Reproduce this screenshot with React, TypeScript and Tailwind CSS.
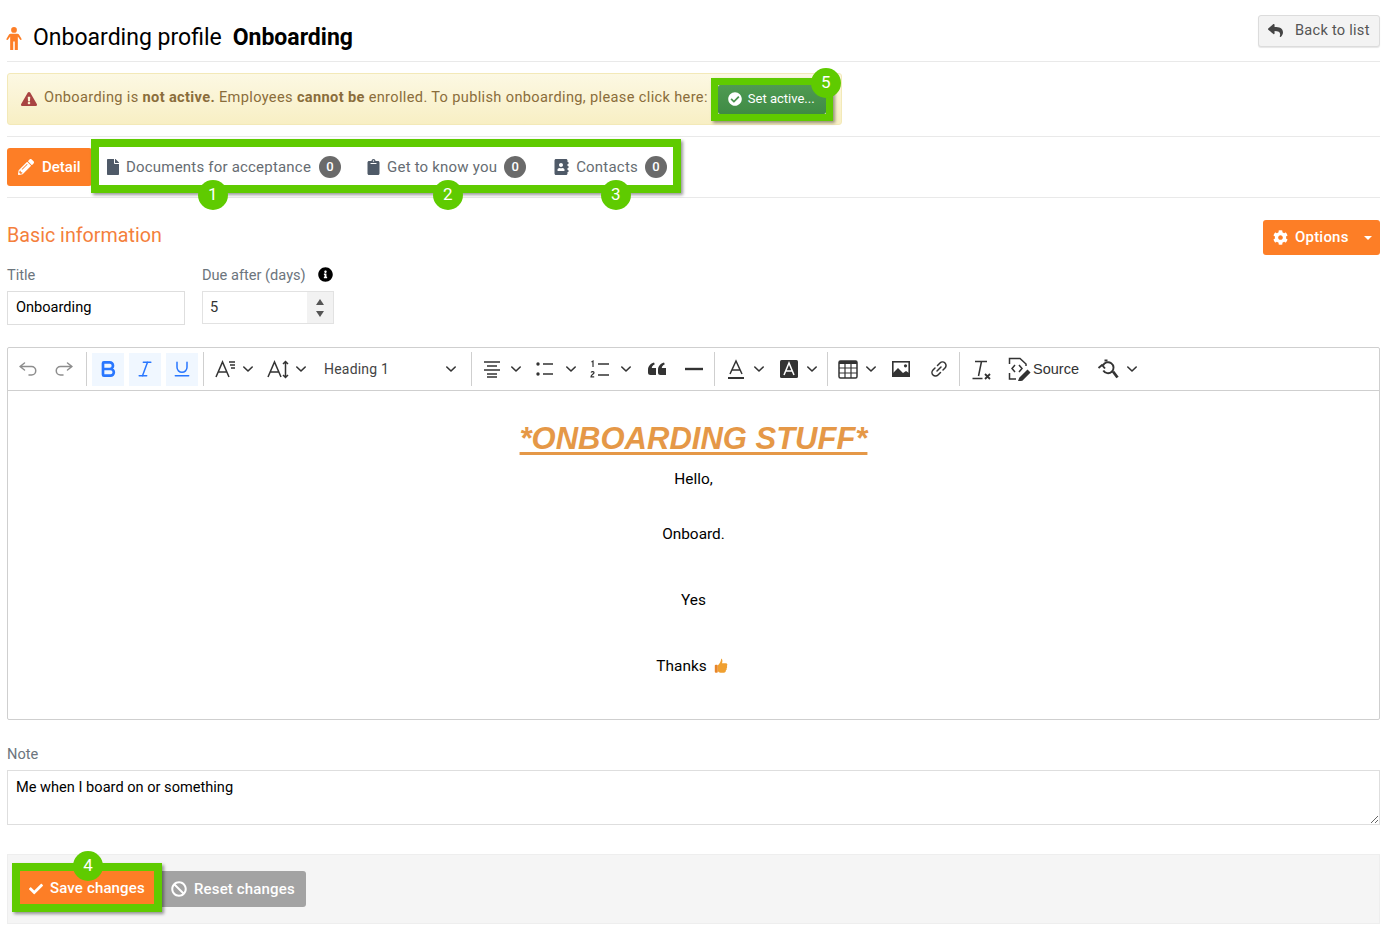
import type { ReactNode } from "react";
import {
  FaAddressBook,
  FaBan,
  FaCheck,
  FaCheckCircle,
  FaClipboard,
  FaCog,
  FaExclamationTriangle,
  FaFile,
  FaInfoCircle,
  FaPencilAlt,
  FaReply,
} from "react-icons/fa";
import { Bold, Italic, Underline } from "lucide-react";

function Callout({ n, className }: { n: number; className: string }) {
  return (
    <span
      className={`absolute z-20 flex h-[30px] w-[30px] items-center justify-center rounded-full bg-[#5fcb00] text-[17px] text-white ${className}`}
    >
      {n}
    </span>
  );
}

function Frame({ className }: { className: string }) {
  return (
    <span
      className={`pointer-events-none absolute z-10 border-solid border-[#5fcb00] shadow-[2px_2px_3px_rgba(0,0,0,0.4)] ${className}`}
    />
  );
}

function Badge() {
  return (
    <span className="flex h-[22px] w-[22px] shrink-0 items-center justify-center rounded-full bg-[#6a6a6a] text-[13px] font-medium tracking-normal text-white">
      0
    </span>
  );
}

function Sep({ className }: { className: string }) {
  return <span className={`h-[34px] w-px bg-[#cfcfcf] ${className}`} />;
}

function Chev({ className }: { className: string }) {
  return (
    <svg viewBox="0 0 12 12" width={12} height={12} fill="none" stroke="#333" strokeWidth={1.6} className={`shrink-0 ${className}`}>
      <path d="M1.800 4 6 8l4.200-4" strokeLinecap="round" strokeLinejoin="round" />
    </svg>
  );
}

function Ic({ className, children }: { className: string; children: ReactNode }) {
  return (
    <svg viewBox="0 0 24 24" width={24} height={24} fill="none" stroke="#333" strokeWidth={1.5} className={`shrink-0 ${className}`}>
      {children}
    </svg>
  );
}

function ActiveBtn({ className, children }: { className: string; children: ReactNode }) {
  return (
    <span className={`flex h-[33px] w-[32px] shrink-0 items-center justify-center bg-[#f0f7ff] text-[#2977ff] ${className}`}>
      {children}
    </span>
  );
}

function Toolbar() {
  return (
    <div className="flex h-[43px] items-center border-b border-[#cfcfcf] pl-[2px] font-['Liberation_Sans',sans-serif] text-[14.5px] text-[#333]">
      <Ic className="ml-[6px]">
        <path d="M8.500 6 4 9.500 8.500 13M4 9.500h11.500a4.200 4.200 0 0 1 0 8.500H13" stroke="#8d8d8d" strokeLinecap="round" strokeLinejoin="round" />
      </Ic>
      <Ic className="ml-[12px]">
        <path d="m15.500 6 4.500 3.500-4.500 3.500M20 9.500H8.500a4.200 4.200 0 0 0 0 8.500H11" stroke="#8d8d8d" strokeLinecap="round" strokeLinejoin="round" />
      </Ic>
      <Sep className="ml-[10px]" />
      <ActiveBtn className="ml-[5px]"><Bold size={20} strokeWidth={3.2} /></ActiveBtn>
      <ActiveBtn className="ml-[5px]"><Italic size={20} strokeWidth={1.8} /></ActiveBtn>
      <ActiveBtn className="ml-[5px]"><Underline size={20} strokeWidth={1.8} /></ActiveBtn>
      <Sep className="ml-[5px]" />

      {/* font family */}
      <Ic className="ml-[9px]">
        <path d="m3 20 6.500-15L16 20M5.500 15h8M16 5h6M17 8h5M18 11h4" />
      </Ic>
      <Chev className="ml-[5px]" />
      {/* font size */}
      <Ic className="ml-[12px]">
        <path d="m2 20 6.500-15L15 20M4.500 15h8M19.500 5v15M17 7l2.500-2.500L22 7M17 18l2.500 2.500L22 18" />
      </Ic>
      <Chev className="ml-[5px]" />
      <span className="ml-[17px] w-[121px] font-['Roboto',sans-serif] text-[14px] tracking-[0.2px] text-[#444]">Heading 1</span>
      <Chev className="" />
      <Sep className="ml-[14px]" />

      {/* alignment */}
      <Ic className="ml-[8px]">
        <path d="M4 5h16M7 9h10M4 13h16M7 17h10M7 20h10" />
      </Ic>
      <Chev className="ml-[6px]" />
      {/* bullets */}
      <Ic className="ml-[11px]">
        <path d="M10 7h10M10 17h10" />
        <circle cx="5" cy="7" r="1.700" fill="#333" stroke="none" />
        <circle cx="5" cy="17" r="1.700" fill="#333" stroke="none" />
      </Ic>
      <Chev className="ml-[8px]" />
      {/* numbered */}
      <Ic className="ml-[11px]">
        <path d="M10 7h11M10 18h11" />
        <path d="M3.500 5 5 4v6M3 15.500c1-1.500 3-1 3 .3 0 1.200-3 2-3 4h3.200" strokeWidth={1.200} />
      </Ic>
      <Chev className="ml-[8px]" />
      {/* quote */}
      <svg viewBox="0 0 24 24" width={24} height={24} className="ml-[13px] shrink-0" fill="#333">
        <path d="M11 18H5.500A2.500 2.500 0 0 1 3 15.500V13c0-4 2.500-6.500 6-7.500l.8 1.800C7.800 8.200 7 9.500 6.800 11H11ZM21 18h-5.500a2.500 2.500 0 0 1-2.500-2.500V13c0-4 2.500-6.500 6-7.500l.8 1.800c-2 .9-2.800 2.200-3 3.700H21Z" />
      </svg>
      {/* horizontal line */}
      <Ic className="ml-[13px]">
        <path d="M3 12h18" strokeWidth={2.400} />
      </Ic>
      <Sep className="ml-[8px]" />

      {/* font color */}
      <Ic className="ml-[9px]">
        <path d="m6 17 6-13 6 13M8 13h8" />
        <path d="M4 21h16" strokeWidth={2} />
      </Ic>
      <Chev className="ml-[5px]" />
      {/* background color */}
      <svg viewBox="0 0 24 24" width={24} height={24} className="ml-[12px] shrink-0">
        <rect x="3" y="3" width="18" height="18" rx="1.500" fill="#333" />
        <path d="m7 18 5-12 5 12M8.800 14h6.400" fill="none" stroke="#fff" strokeWidth={1.500} />
      </svg>
      <Chev className="ml-[5px]" />
      <Sep className="ml-[9px]" />

      {/* table */}
      <Ic className="ml-[8px]">
        <rect x="3" y="4" width="18" height="17" rx="1.500" />
        <path d="M3 5.500h18" strokeWidth={3} />
        <path d="M3 11h18M3 16h18M9 4v17M15 4v17" strokeWidth={1.200} />
      </Ic>
      <Chev className="ml-[5px]" />
      {/* image */}
      <Ic className="ml-[12px]">
        <rect x="3.800" y="4.800" width="16.400" height="14.400" strokeWidth={1.600} />
        <path d="M4 19v-3l5-5 5 5 3-2 3 2v3Z" fill="#333" stroke="none" />
        <circle cx="16.500" cy="8.800" r="1.600" fill="#333" stroke="none" />
      </Ic>
      {/* link */}
      <Ic className="ml-[14px]">
        <path d="M10.500 8.500 13 6a3.500 3.500 0 0 1 5 5l-2 2M13.500 15.500 11 18a3.500 3.500 0 0 1-5-5l2-2M10 14l4-4" strokeLinecap="round" />
      </Ic>
      <Sep className="ml-[8px]" />

      {/* clear formatting */}
      <Ic className="ml-[9px]">
        <path d="M6 4.500h12M12.500 4.500 9.500 19M3.500 21.500h10" />
        <path d="m16 17 5 5M21 17l-5 5" strokeWidth={1.800} />
      </Ic>
      {/* source editing */}
      <Ic className="ml-[14px]">
        <path d="M8 8 5 11.500 8 15M12 8l3 3.500-3 3.500" />
        <path d="M2.500 7V1.500H13L19 7v2M2.500 16v6H9" />
        <path d="m13 21 7.500-7.500 2 2L15 23l-3 .5Z" fill="#333" />
      </Ic>
      <span className="ml-[2px] w-[46px] pt-[1px]">Source</span>
      {/* find and replace */}
      <Ic className="ml-[17px]">
        <path d="M7 8.500a5.500 5.500 0 1 1 .3 5" strokeWidth={1.900} />
        <path d="m17 14.500 4.500 6" strokeWidth={2.800} />
        <path d="M2.500 11 6 8l3 3.500M8.500 3.500h3" strokeWidth={1.900} />
      </Ic>
      <Chev className="ml-[6px]" />
    </div>
  );
}

function PersonIcon() {
  return (
    <svg viewBox="0 0 16 24" width={16} height={23} className="ml-[-1px] mr-[11px] shrink-0" fill="#fd7e26">
      <circle cx="8" cy="3" r="3" />
      <path d="M4.500 7h7c.8 0 1.300.3 1.700.9l2.600 4.300c.5 1-.9 1.900-1.600.9L12 10v14H8.800V15H7.200v9H4V10l-2.200 3.100c-.7 1-2.100.1-1.600-.9l2.600-4.300C3.200 7.300 3.700 7 4.500 7Z" />
    </svg>
  );
}

function ThumbsUp() {
  return (
    <svg viewBox="0 0 16 16" width={16} height={16} className="ml-[6px] mr-[2px] inline-block align-[-3px]">
      <path d="M8.200.500c1.400.6 1.500 2.600.8 4.800h3.800c1.700 0 1.900 1.800 1.100 2.600.5.900.3 1.800-.3 2.300.3.900 0 1.700-.7 2.100.1 1.400-.8 2.400-2.100 2.400H7.500C6 14.700 5.400 14 5 13.300V7.300c1.500-1.400 3-3.800 3.200-6.800Z" fill="#f0a030" />
      <rect x="1.800" y="6.800" width="3" height="8" rx="1" fill="#e8862a" />
    </svg>
  );
}

export default function App() {
  return (
    <div className="min-h-[929px] bg-white pl-[7px] pr-[6px] font-['Roboto',sans-serif] text-[14.6px] text-black">
      {/* Header */}
      <div className="flex h-[62px] items-start justify-between border-b border-[#e9e9e9] pt-[15px]">
        <div className="mt-[7px] flex items-center text-[23px] leading-[32px]">
          <PersonIcon />
          <span>Onboarding profile</span>
          <span className="ml-[11px] font-bold">Onboarding</span>
        </div>
        <button className="flex h-[32px] w-[122px] items-center rounded-[3px] border border-[#dcdcdc] bg-[#f3f3f3] pb-[1px] pl-[9px] tracking-[0.25px] text-[#555] shadow-[0_1px_1px_rgba(0,0,0,0.1)]">
          <FaReply size={15} className="text-[#444]" />
          <span className="ml-[12px]">Back to list</span>
        </button>
      </div>

      {/* Alert */}
      <div className="mt-[11px] flex h-[52px] w-[835px] items-center rounded-[3px] border border-[#f3e9b8] bg-gradient-to-b from-[#fcf8e3] to-[#f8efc4] pl-[13px] text-[#8a6d3b]">
        <FaExclamationTriangle size={16} className="text-[#a94442]" />
        <span className="mb-[2px] ml-[7px] tracking-[0.345px]">
          Onboarding is <b className="font-bold">not active.</b> Employees <b className="font-bold">cannot be</b> enrolled. To publish onboarding, please click here:
        </span>
        <div className="relative ml-[10px]">
          <Frame className="-inset-[7px] border-[7px]" />
          <Callout n={5} className="-right-[15px] -top-[17px]" />
          <button className="flex h-[29px] w-[108px] items-center rounded-[2px] bg-gradient-to-b from-[#4f9a52] to-[#3f8b45] pl-[10px] text-[13px] text-white">
            <FaCheckCircle size={14} />
            <span className="ml-[6px]">Set active...</span>
          </button>
        </div>
      </div>
      <div className="mt-[11px] border-b border-[#e9e9e9]" />

      {/* Tabs */}
      <div className="mt-[11px] flex h-[38px] items-center">
        <button className="flex h-[38px] w-[85px] items-center rounded-[3px] bg-[#fd7e26] pl-[11px] text-[15px] font-medium text-white">
          <FaPencilAlt size={16} />
          <span className="ml-[8px]">Detail</span>
        </button>
        <div className="relative ml-[7px] flex h-[38px] w-[574px] items-center whitespace-nowrap pl-[8px] text-[15px] tracking-[0.2px] text-[#666c72]">
          <Frame className="-inset-x-[8px] -bottom-[7px] -top-[9px] border-[8px]" />
          <Callout n={1} className="left-[99px] top-[32px]" />
          <Callout n={2} className="left-[334px] top-[32px]" />
          <Callout n={3} className="left-[502px] top-[32px]" />
          <FaFile className="h-4 w-[12px] shrink-0 text-[#4f5a68]" />
          <span className="ml-[7px] mr-[8px]">Documents for acceptance</span>
          <Badge />
          <FaClipboard className="ml-[26px] h-4 w-[13px] shrink-0 text-[#4f5a68]" />
          <span className="mx-[7px]">Get to know you</span>
          <Badge />
          <FaAddressBook className="ml-[28px] h-4 w-[15px] shrink-0 text-[#4f5a68]" />
          <span className="ml-[7px] mr-[7px]">Contacts</span>
          <Badge />
        </div>
      </div>
      <div className="mt-[11px] border-b border-[#e9e9e9]" />

      {/* Basic information */}
      <div className="mt-[22px] flex h-[35px] items-start justify-between">
        <h2 className="text-[19.7px] leading-[32px] text-[#f47f3c]">Basic information</h2>
        <button className="flex h-[35px] w-[117px] items-center rounded-[3px] bg-[#fd7e26] pl-[10px] text-[15px] font-medium text-white">
          <FaCog size={15} />
          <span className="ml-[7px] tracking-[0.2px]">Options</span>
          <span className="ml-[15px] h-0 w-0 border-x-[4px] border-t-[4px] border-x-transparent border-t-white" />
        </button>
      </div>

      <div className="mt-[11px] flex gap-[17px]">
        <div className="w-[178px]">
          <label className="block h-[25px] leading-[18px] text-[#6c757d]">Title</label>
          <input
            readOnly
            value="Onboarding"
            className="h-[34px] w-full border border-[#dedede] pb-[2px] pl-[8px] text-black outline-none"
          />
        </div>
        <div className="w-[132px]">
          <label className="flex h-[25px] items-start justify-between leading-[18px] text-[#6c757d]">
            Due after (days)
            <FaInfoCircle size={15} className="mr-[1px] mt-[1px] text-black" />
          </label>
          <div className="flex h-[33px] border border-[#e2e2e2]">
            <input readOnly value="5" className="w-[104px] px-[7px] text-[#333] outline-none" />
            <div className="flex flex-1 flex-col items-center justify-center gap-[6px] bg-[#f2f2f2]">
              <span className="h-0 w-0 border-x-[4.5px] border-b-[6px] border-x-transparent border-b-[#555]" />
              <span className="h-0 w-0 border-x-[4.5px] border-t-[6px] border-x-transparent border-t-[#555]" />
            </div>
          </div>
        </div>
      </div>

      {/* Editor */}
      <div className="mt-[22px] h-[373px] rounded-[2px] border border-[#cfcfcf]">
        <Toolbar />
        <div className="pt-[28px] text-center text-[15.4px] leading-[24px]">
          <h1 className="font-['Liberation_Sans',sans-serif] text-[31px] font-bold italic leading-[40px] text-[#e59847] underline decoration-[3px] underline-offset-[3px]">
            *ONBOARDING STUFF*
          </h1>
          <p className="mt-[8px]">Hello,</p>
          <p className="mt-[31px]">Onboard.</p>
          <p className="mt-[42px]">Yes</p>
          <p className="mt-[42px]">
            Thanks
            <ThumbsUp />
          </p>
        </div>
      </div>

      {/* Note */}
      <label className="mt-[25px] block h-[25px] leading-[18px] text-[#6c757d]">Note</label>
      <textarea
        readOnly
        value="Me when I board on or something"
        className="block h-[55px] w-full border border-[#dedede] py-[6px] pl-[8px] pr-[9px] leading-[20px] text-black outline-none"
      />

      {/* Footer */}
      <div className="mt-[29px] flex h-[70px] items-start border border-[#eeeeee] bg-[#f5f5f5] pl-[12px] pt-[16px]">
        <div className="relative">
          <Frame className="-inset-x-[8px] -bottom-[7px] -top-[8px] border-[8px]" />
          <Callout n={4} className="left-[53px] -top-[20px]" />
          <button className="flex h-[34px] w-[134px] items-center bg-[#fd7e26] pl-[9px] pt-[1px] text-[15px] font-medium tracking-[0.15px] text-white">
            <FaCheck size={14} />
            <span className="ml-[7px]">Save changes</span>
          </button>
        </div>
        <button className="ml-[8px] flex h-[36px] w-[144px] items-center rounded-r-[3px] bg-[#a3a3a3] pl-[9px] text-[15px] font-medium tracking-[0.15px] text-white">
          <FaBan size={16} />
          <span className="ml-[7px]">Reset changes</span>
        </button>
      </div>
    </div>
  );
}
